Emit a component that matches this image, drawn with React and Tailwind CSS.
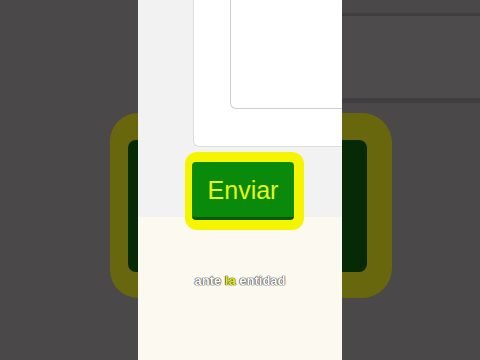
export default function App() {
  return (
    <div className="flex h-[360px] w-[480px] overflow-hidden bg-[#4a4848] font-['Liberation_Sans',Arial,sans-serif]">
      {/* left blurred backdrop */}
      <div className="flex w-[138px] flex-col items-end pt-[113px]">
        <div className="flex h-[185px] w-[28px] items-center justify-end rounded-l-[30px] bg-[#68670e]">
          <div className="h-[132px] w-[10px] rounded-l-[8px] bg-[#062a06]" />
        </div>
      </div>

      {/* center video strip */}
      <div className="flex w-[204px] flex-col bg-[linear-gradient(#f3f2f2_217px,#fcf9f1_217px)]">
        <div className="ml-[55px] h-[147px] rounded-bl-[6px] border-b border-l border-[#dcdcdc] bg-white">
          <div className="ml-[36px] h-[109px] rounded-bl-[6px] border-b border-l border-[#cfcfcf] bg-white" />
        </div>

        <div className="ml-[47px] mt-[5px] flex h-[78px] w-[119px] items-start rounded-[12px] bg-[#f5f500] pl-[7px] pt-[10px]">
          <div className="flex h-[58px] w-[102px] items-center justify-center rounded-[4px] border-b-[3px] border-[#005a00] bg-[#0a8a0a] pt-[2px] text-[25px] text-[#e4f41c]">
            Enviar
          </div>
        </div>

        <div className="mt-[43px] text-center text-[13px] font-bold leading-[16px] text-white [text-shadow:0_0_1px_#333,0_0_1px_#333,0_0_1px_#333]">
          ante <span className="text-[#e6f000]">la</span> entidad
        </div>
      </div>

      {/* right blurred backdrop */}
      <div className="flex w-[138px] flex-col">
        <div className="h-[13px] bg-[#4a4848]" />
        <div className="h-[3px] bg-[#3f3d3d]" />
        <div className="h-[82px] bg-[#4d4b4b]" />
        <div className="h-[5px] bg-[#403e3e]" />
        <div className="h-[10px] bg-[#4a4848]" />
        <div className="flex h-[185px] w-[50px] items-center rounded-r-[30px] bg-[#68670e]">
          <div className="h-[132px] w-[25px] rounded-r-[8px] bg-[#062a06]" />
        </div>
      </div>
    </div>
  )
}
